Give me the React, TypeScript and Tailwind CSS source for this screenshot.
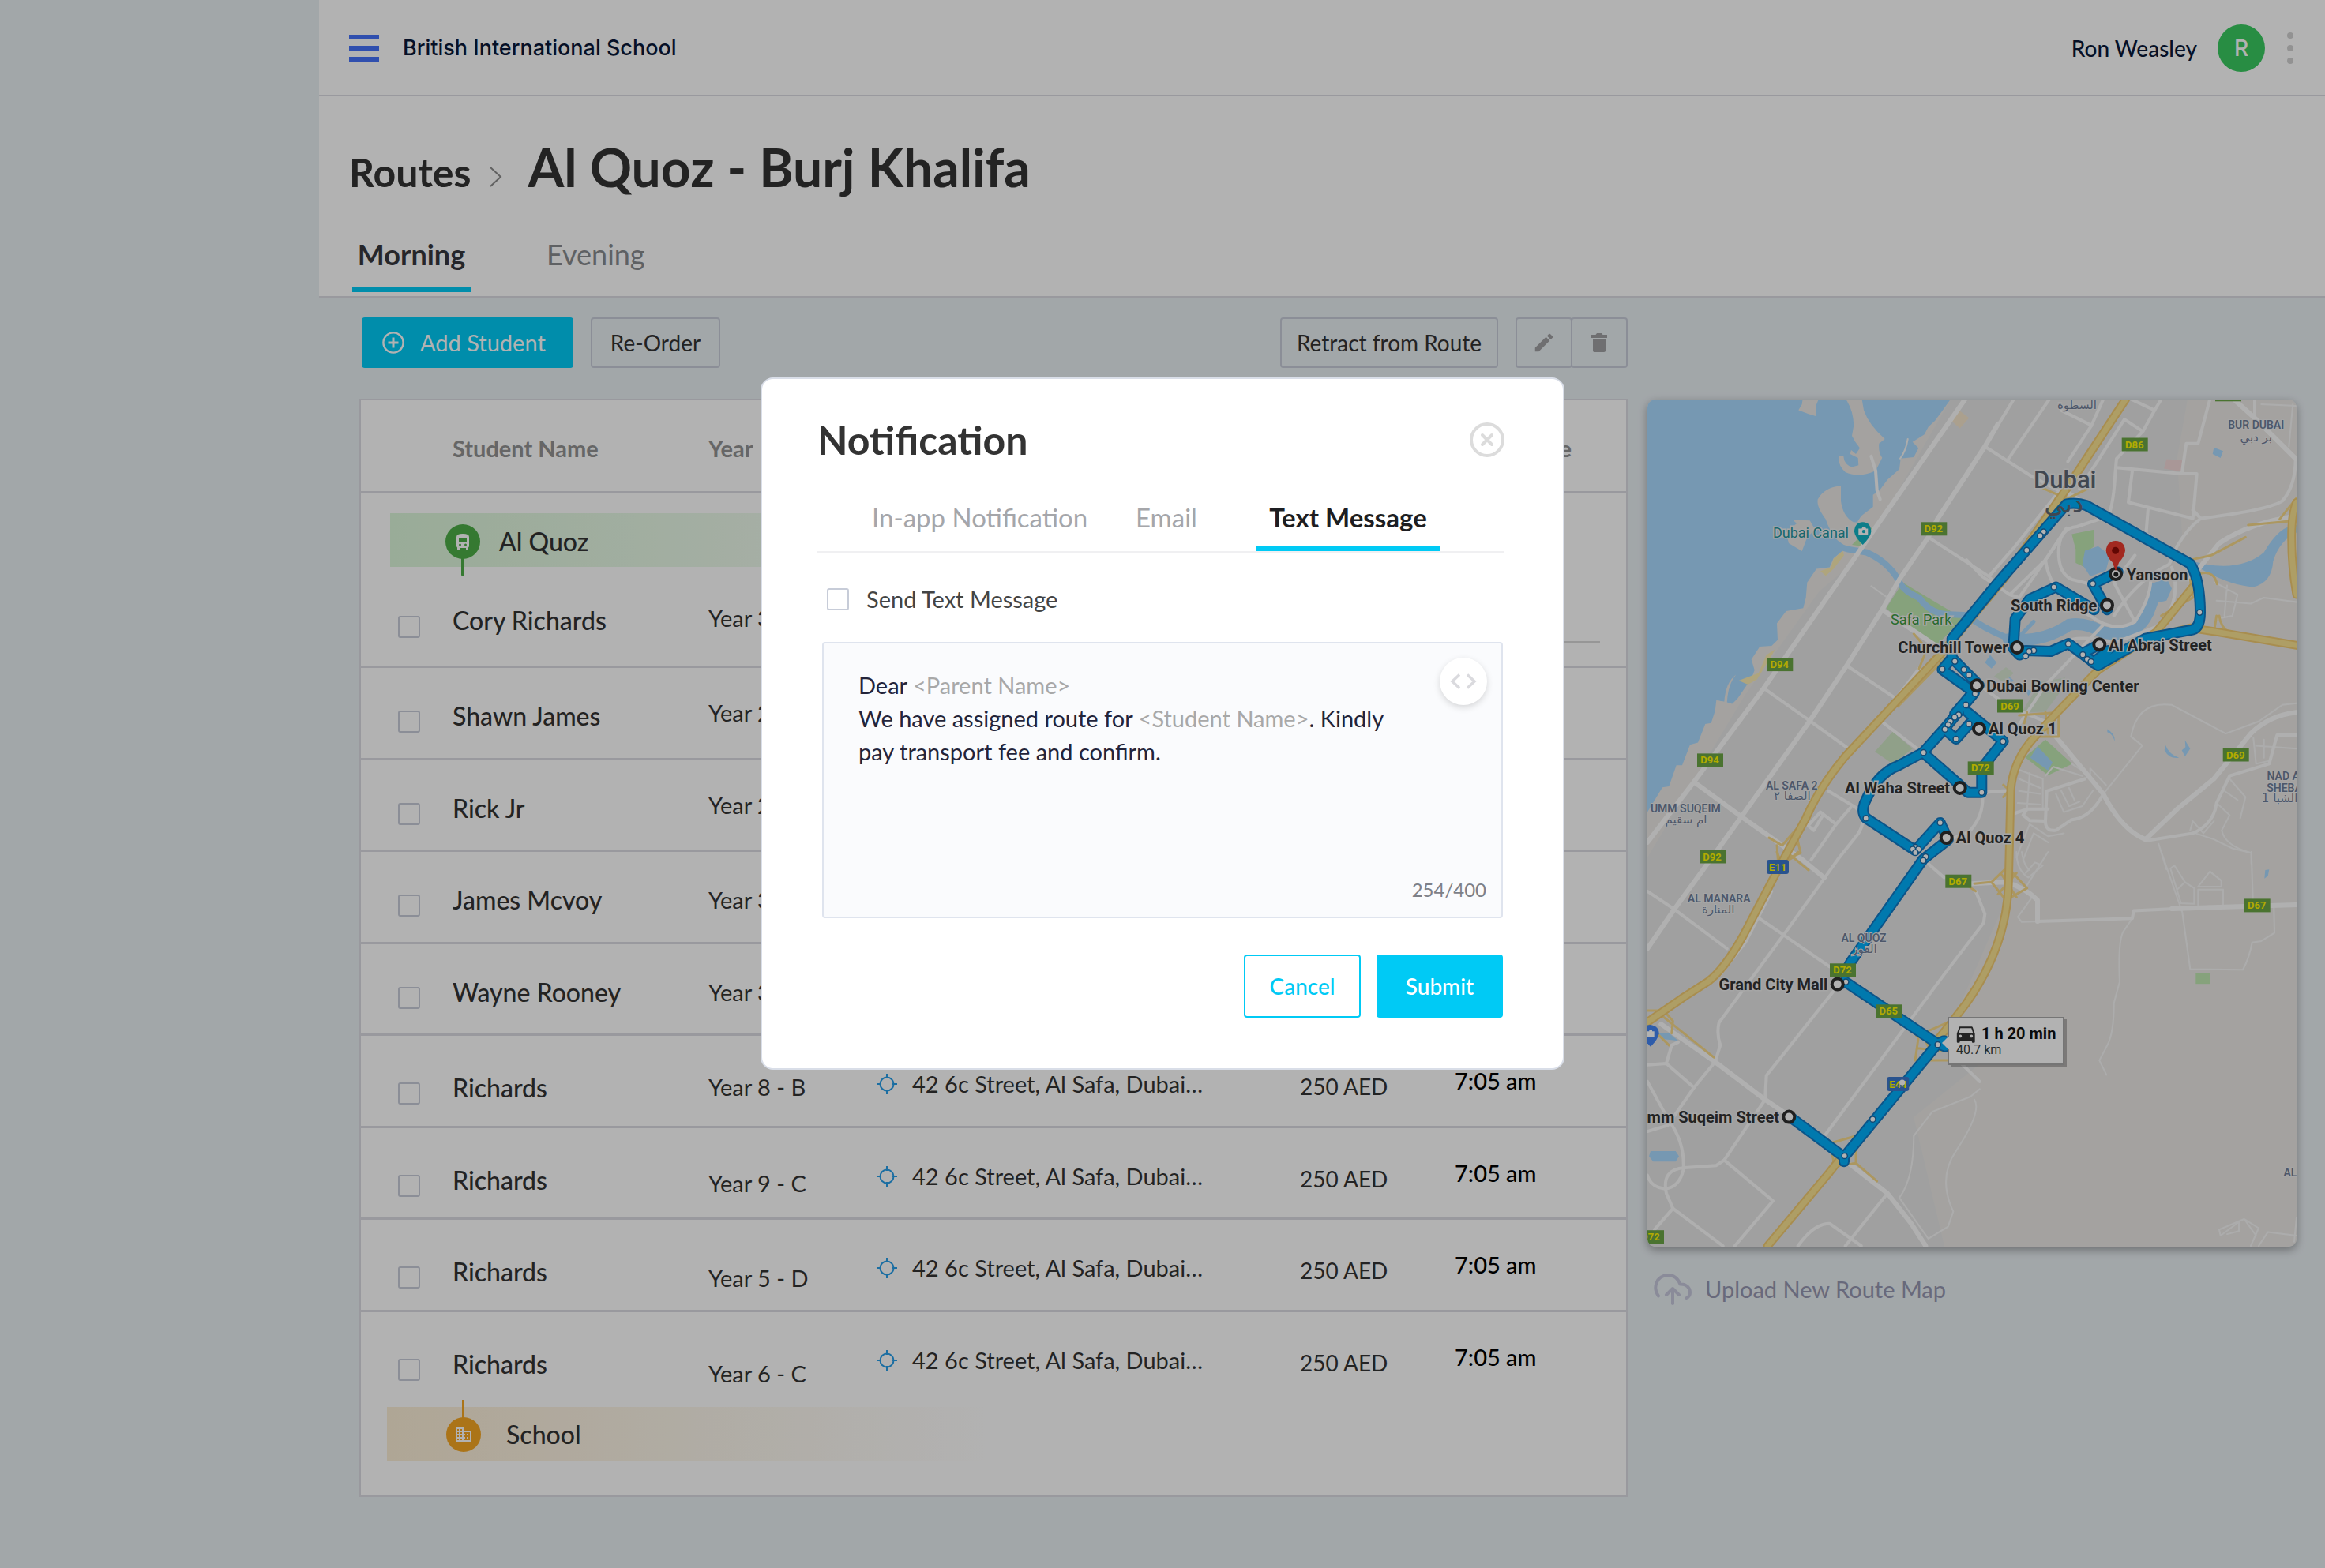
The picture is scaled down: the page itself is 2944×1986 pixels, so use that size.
import React from "react";

type Tile = "nw" | "ne" | "sw" | "se";

/* The map is surveyed in four sheets; each has its own origin inside the map. */
const ORIGIN: Record<Tile, [number, number]> = {
  nw: [-16, -17],
  ne: [404, -17],
  sw: [-16, 573],
  se: [404, 573],
};

const px = (t: Tile, x: number) => Math.round((ORIGIN[t][0] + x / 3) * 10) / 10;
const py = (t: Tile, y: number) => Math.round((ORIGIN[t][1] + y / 2.613) * 10) / 10;
const path = (t: Tile, d: string) =>
  d.replace(/(-?\d+),(-?\d+)/g, (_, x, y) => `${px(t, +x)},${py(t, +y)}`);

type Shape = [Tile, string];

const WIDE_ROADS: Shape[] = [
  ["nw", "M1255,43 L905,480 L830,575 L490,1000 L225,1310 L48,1510"],
  ["nw", "M1380,125 L1330,200 L1150,440 L1115,500 L1005,640 L940,740 L805,925 L665,1108 L405,1425 L310,1540 L150,1732 L48,1862"],
  ["nw", "M940,740 L1180,880"],
  ["nw", "M225,1310 L405,1425 L560,1520 L640,1570 L720,1627"],
  ["sw", "M100,570 L305,695 L495,820 L580,870"],
  ["sw", "M820,1035 L960,1130 L1050,1230 L1105,1304"],
  ["ne", "M330,1150 L520,1350 Q590,1470 680,1500"],
  ["ne", "M1254,1080 Q1150,1090 1080,1150 L940,1300 L800,1400 L680,1500"],
  ["ne", "M1015,43 L1100,110 L1250,240"],
  ["se", "M20,105 L140,100 Q210,110 270,160 L270,230"],
  ["se", "M780,188 L1254,175"],
  ["ne", "M380,350 L440,385 L700,500"],
  ["ne", "M850,640 L960,520 Q1080,450 1254,430"],
];

const ROADS: Shape[] = [
  ["nw", "M1115,500 L1345,630 L1380,660"],
  ["nw", "M1330,200 L1510,300 L1620,350"],
  ["nw", "M1345,630 L1440,535 L1620,340"],
  ["nw", "M805,925 L985,1030"],
  ["nw", "M1080,935 L960,1070 L800,1220"],
  ["nw", "M490,1000 L665,1108 L820,1205"],
  ["nw", "M945,1115 L1080,1205"],
  ["nw", "M735,1340 L840,1395 Q885,1430 850,1480 L770,1568 L565,1817"],
  ["nw", "M820,1395 L765,1450 L670,1568"],
  ["nw", "M765,1450 L705,1410 L658,1455 L680,1470 L715,1420"],
  ["nw", "M1400,1340 L1320,1345 Q1330,1420 1270,1475 L1200,1500"],
  ["nw", "M898,232 L915,280 L920,345 L932,375"],
  ["sw", "M48,130 L150,190 L350,320"],
  ["sw", "M565,275 L320,565 Q310,600 325,640 L305,695"],
  ["sw", "M520,130 L420,300 L325,405"],
  ["sw", "M465,215 L565,275 L740,380"],
  ["sw", "M765,450 L500,740 L495,820 L340,1020"],
  ["sw", "M305,695 L225,780 L125,905 L48,925"],
  ["sw", "M48,705 L120,700 L225,780"],
  ["sw", "M165,630 L140,640 L120,700"],
  ["sw", "M48,760 L130,890 Q190,960 185,1050 Q170,1110 115,1115 Q60,1110 48,1070"],
  ["sw", "M75,1250 L145,1180 L120,1130 Q100,1050 190,1045 L310,1038 L340,1020 L525,1155 L380,1304"],
  ["sw", "M145,1180 L335,1304"],
  ["sw", "M960,1130 L800,1304"],
  ["sw", "M620,1304 Q680,1230 740,1230 L860,1304"],
  ["sw", "M725,935 L1180,400 L1325,235 L1330,205 L1295,130"],
  ["sw", "M1110,35 L1175,85"],
  ["sw", "M1240,700 L1310,760"],
  ["ne", "M180,43 L0,300"],
  ["ne", "M315,43 L160,240"],
  ["ne", "M360,80 L475,130 L520,43"],
  ["ne", "M475,130 L385,250"],
  ["ne", "M625,43 L715,80 L740,43"],
  ["ne", "M715,80 L670,150 L600,110 L430,340"],
  ["ne", "M670,150 L570,240 L565,290 Q560,380 540,430 L420,465 Q350,470 350,550 Q350,620 400,640 L470,655"],
  ["ne", "M925,43 L880,190 L835,190 L818,290 L570,270"],
  ["ne", "M630,280 L615,385 L860,438 L875,290 L818,290"],
  ["ne", "M690,405 L680,510"],
  ["ne", "M1250,240 Q1250,330 1200,380 Q1150,410 890,438 L860,410"],
  ["ne", "M890,438 Q840,470 800,530 L770,590 Q650,640 560,760"],
  ["ne", "M1095,43 L1095,110"],
  ["ne", "M0,575 L60,630 L165,690 L300,575 L380,470"],
  ["ne", "M165,690 L200,700 L360,500"],
  ["ne", "M300,575 Q320,700 470,760 Q560,820 640,780 Q700,700 700,640"],
  ["ne", "M640,560 L560,650 L640,780"],
  ["ne", "M780,600 Q820,700 740,790 L560,850 Q430,820 360,850"],
  ["ne", "M200,1120 L300,990 L520,790"],
  ["ne", "M50,990 L160,1060 L300,1110"],
  ["ne", "M180,1415 L230,1400 L310,1400 M230,1400 L215,1420 L240,1438 L300,1440"],
  ["ne", "M450,1300 L305,1340 L300,1440 Q300,1475 340,1470 L400,1435 Q470,1430 520,1350"],
  ["ne", "M60,1345 L150,1340"],
  ["ne", "M680,1505 L860,1480 Q940,1450 950,1380 L1000,1290 L1150,1250 L1180,1155 L1254,1155"],
  ["se", "M270,230 L630,220 L635,195 L790,188"],
];

const LANES: Shape[] = [
  ["nw", "M898,662 L960,700"],
  ["nw", "M1037,175 Q1030,215 1008,240"],
  ["sw", "M1310,785 L1275,810 L1130,860 L1060,940 Q1060,1080 1005,1145 L1115,1280 L1190,1240 L1210,1190 Q1150,1080 1220,990 Q1320,860 1290,820"],
  ["ne", "M1254,1050 L1200,1055 L1110,1110 L985,1150 L780,1055 Q650,1040 625,1160 L668,1190 L520,1350"],
  ["ne", "M1120,60 L1254,65 M1240,60 L1225,200"],
  ["ne", "M1090,1165 L1100,1250 L1150,1240 M1100,1190 L1254,1200 M1130,1170 L1130,1230"],
  ["ne", "M950,1380 L1000,1420 L970,1470 Q980,1520 1080,1545 M1000,1300 L1060,1360 L1040,1430 M980,1340 L1030,1370"],
  ["ne", "M860,1440 L900,1480 L940,1440 M860,1440 L850,1470"],
  ["ne", "M945,650 L1030,690 L1010,760 L950,770 M990,660 L980,760 M950,710 L1080,720 L1130,700 L1254,715"],
  ["ne", "M200,1270 L290,1300 L290,1400 M200,1300 L280,1330 M200,1340 L280,1350 M195,1380 L280,1385 M240,1280 L230,1400"],
  ["ne", "M340,1350 L370,1410 L440,1390 L480,1340 M360,1340 L390,1390 L430,1375 M390,1330 L410,1370"],
  ["ne", "M300,1290 L330,1260 L440,1290 M400,1250 L470,1290 L470,1265 L530,1320"],
  ["ne", "M190,1560 L240,1450 L310,1490 L370,1480 M215,1568 L255,1480 L310,1510"],
  ["ne", "M730,1515 L760,1600"],
  ["ne", "M870,1480 L940,1500 L1010,1530 L1082,1545 L1082,1580"],
  ["se", "M190,0 Q190,60 235,85 L290,45 L260,35 L225,70 M210,0 Q220,50 240,60 M230,110 L310,0"],
  ["se", "M245,155 L195,215 L210,232 L270,230"],
  ["se", "M740,0 L820,200 L850,388 L1050,390 Q1075,350 1085,300 L1120,295 L1170,268 L1168,185"],
  ["se", "M1082,0 L1088,160"],
  ["se", "M630,220 L595,265 Q575,300 582,430 L560,500 Q560,600 535,640 L505,690 L532,738"],
  ["se", "M775,55 L815,170 L865,172 L865,120 L830,100 L790,45 L775,55 M830,100 L800,125"],
  ["se", "M880,180 L880,125 L975,125 L975,180 M880,115 L925,65 L968,95 L968,115 L880,115"],
  ["se", "M960,1250 L1055,1215 L1110,1245 L1080,1304 M960,1250 L965,1270 L1035,1225 L1035,1255 L990,1265 M1055,1215 L1100,1270"],
  ["se", "M1110,1304 L1145,1258 L1254,1270 M1254,1210 L1245,1290"],
];

const HIGHWAYS: Shape[] = [
  ["nw", "M1865,43 L1640,340 L1400,640 L1170,880 L1100,945 L800,1225 Q700,1330 650,1430 L580,1542 L520,1640 L410,1822 Q340,1930 280,1970 L190,2020 L48,2105"],
  ["ne", "M1254,385 Q1235,420 1235,500 Q1235,600 1254,690"],
  ["ne", "M860,665 L720,815 L500,940 L345,1080 L260,1160 Q175,1240 168,1340 L160,1642 Q155,1850 0,2042 L-60,2110 L-120,2175"],
  ["sw", "M795,1000 L740,1060 L505,1304"],
  ["ne", "M720,830 L850,800 L960,815 L1254,858"],
];

const RAMPS: Shape[] = [
  ["nw", "M510,1495 L560,1520 L610,1470 L630,1545 L590,1560 M540,1520 L545,1580 L600,1560 M1060,820 L1110,870 L1080,935 M1180,900 L1000,1060"],
  ["sw", "M540,0 Q560,60 620,0 M590,10 L660,60 M48,525 L110,525 L145,560 L140,600 M100,540 L300,680 M60,580 L130,640"],
  ["sw", "M1070,610 L1200,560 M1080,600 L1065,690 L1190,690 M1075,650 L1190,660 M1090,590 L1130,680"],
  ["sw", "M740,965 L840,940 L840,1030 L760,1040 Z M840,1030 L920,1090"],
  ["ne", "M270,330 L400,380 M320,400 L460,340 M300,440 L340,370"],
  ["ne", "M850,575 L930,560 L1060,500 M890,620 Q940,610 952,655 M950,760 L940,815 M960,760 Q965,800 1000,815 M850,640 L860,700 L740,760"],
  ["ne", "M1190,440 L1254,370 M1070,460 L1254,445"],
  ["ne", "M200,1090 L350,1080 L350,1160 L270,1160 M215,1130 L230,1080 M300,1080 L310,1150"],
  ["se", "M155,50 L95,100 L150,160 L230,120 Z M130,70 L190,150 M190,70 L120,140 M30,105 L90,100 M0,110 L35,130"],
  ["ne", "M140,1320 L180,1350 M140,1360 L180,1320"],
];

const ROUTE: Shape[] = [
  ["sw", "M590,877 L795,1010 L1150,635 L800,430 L775,440 L820,365 L1095,25 L1190,-40 L1160,-97 L1065,-5 L878,-112 Q860,-130 872,-160 Q920,-260 1000,-285 L1095,-329"],
  ["nw", "M1095,1213 L1235,1320 L1265,1345 L1318,1345 L1318,1265 L1400,1175 L1265,1080"],
  ["nw", "M1095,1213 L1180,1130 L1290,1015 L1168,938 L1205,900 L1308,990 L1215,1085"],
  ["nw", "M1178,1136 L1220,1168 L1290,1100"],
  ["nw", "M1205,905 L1205,835 L1380,650 L1640,390 Q1680,385 1715,395 L2110,588 Q2148,640 2148,750 Q2148,805 2110,808 L1940,835 L1760,925 L1647,852 L1580,878 L1485,875 L1462,890 L1438,868 L1445,770 L1500,705 L1600,665 L1745,740"],
  ["ne", "M535,740 L480,655 L575,615"],
  ["ne", "M440,885 L505,855 M480,915 L540,875"],
  ["sw", "M795,1010 L795,1025"],
  ["sw", "M1150,635 L1175,625 M1150,635 L1180,645"],
];

const DOTS: [Tile, number, number][] = [
  ["nw", 1216, 911], ["nw", 1168, 937], ["nw", 1250, 938], ["nw", 1270, 956], ["nw", 1293, 1018],
  ["nw", 1258, 1055], ["nw", 1230, 1088], ["nw", 1215, 1096], ["nw", 1199, 1110], ["nw", 1190, 1121],
  ["nw", 1178, 1136], ["nw", 1220, 1168], ["nw", 1270, 1118], ["nw", 1097, 1213], ["nw", 878, 1430],
  ["nw", 1318, 1345], ["nw", 1160, 1445], ["nw", 1066, 1526], ["nw", 1056, 1533], ["nw", 1078, 1533],
  ["nw", 1066, 1544], ["nw", 1105, 1558], ["nw", 1096, 1570],
  ["ne", 139, 1176], ["ne", 293, 482], ["ne", 280, 495], ["ne", 229, 543], ["ne", 332, 665],
  ["ne", 480, 654], ["ne", 886, 749], ["ne", 387, 853], ["ne", 255, 875], ["ne", 238, 878],
  ["ne", 225, 893], ["ne", 442, 889], ["ne", 459, 904], ["ne", 473, 912],
  ["sw", 777, 410], ["sw", 802, 430], ["sw", 1151, 638], ["sw", 1016, 763], ["sw", 904, 885], ["sw", 797, 1006],
];

type Stop = { t: Tile; x: number; y: number; label: string; lx: number; ly: number; end?: boolean };
const STOPS: Stop[] = [
  { t: "ne", x: 567, y: 622, label: "Yansoon", lx: 608, ly: 642 },
  { t: "ne", x: 534, y: 725, label: "South Ridge", lx: 496, ly: 745, end: true },
  { t: "ne", x: 192, y: 865, label: "Churchill Tower", lx: 158, ly: 884, end: true },
  { t: "ne", x: 505, y: 855, label: "Al Abraj Street", lx: 540, ly: 875 },
  { t: "ne", x: 39, y: 991, label: "Dubai Bowling Center", lx: 76, ly: 1010 },
  { t: "ne", x: 48, y: 1134, label: "Al Quoz 1", lx: 84, ly: 1153 },
  { t: "nw", x: 1235, y: 1330, label: "Al Waha Street", lx: 1197, ly: 1348, end: true },
  { t: "nw", x: 1184, y: 1495, label: "Al Quoz 4", lx: 1220, ly: 1513 },
  { t: "sw", x: 770, y: 438, label: "Grand City Mall", lx: 733, ly: 458, end: true },
  { t: "sw", x: 586, y: 877, label: "Umm Suqeim Street", lx: 549, ly: 895, end: true },
];

const BADGES: [Tile, number, number, string][] = [
  ["nw", 1135, 471, "D92"], ["nw", 550, 920, "D94"], ["nw", 285, 1237, "D94"], ["nw", 1313, 1263, "D72"],
  ["nw", 294, 1556, "D92"], ["ne", 638, 192, "D86"], ["ne", 165, 1057, "D69"], ["ne", 1022, 1219, "D69"],
  ["ne", 993, 27, ""], ["sw", 789, 390, "D72"], ["sw", 964, 526, "D65"], ["sw", 1228, 96, "D67"],
  ["sw", 60, 1273, "D72"], ["se", 1103, 176, "D67"],
];

const DISTRICTS: [Tile, number, number, string][] = [
  ["ne", 1100, 142, "BUR DUBAI"], ["nw", 596, 1334, "AL SAFA 2"], ["nw", 193, 1410, "UMM SUQEIM"],
  ["sw", 320, 167, "AL MANARA"], ["sw", 870, 299, "AL QUOZ"], ["ne", 1215, 1305, "NAD AL"],
  ["ne", 1225, 1342, "SHEBA 1"], ["se", 1262, 1073, "AL BA"],
];

const ARABIC: [Tile, number, number, string][] = [
  ["ne", 420, 75, "السطوة"], ["ne", 1100, 182, "بر دبي"], ["nw", 598, 1370, "الصفا ٢"], ["nw", 195, 1447, "ام سقيم"],
  ["sw", 317, 204, "المنارة"], ["sw", 873, 335, "القوز"], ["ne", 1215, 1378, "ند الشبا 1"],
];

function Strokes({ items, color, width }: { items: Shape[]; color: string; width: number }) {
  return (
    <g fill="none" stroke={color} strokeWidth={width} strokeLinecap="round" strokeLinejoin="round">
      {items.map(([t, d], i) => (
        <path key={i} d={path(t, d)} />
      ))}
    </g>
  );
}

function RouteMap() {
  return (
    <svg viewBox="0 0 822 1073" role="img" aria-label="Route map of Dubai" className="block h-auto w-full rounded-[10px] shadow-[0_4px_12px_rgba(0,0,0,0.35)]" fontFamily="Roboto, sans-serif">
      <rect width="822" height="1073" fill="#ebe9e6" />
      <path fill="#e6e6e6" d={path("nw", "M1200,43 L2100,43 L2060,240 L2080,500 L1900,840 L1500,1140 L1420,1340 L1410,1700 L1200,2120 L1330,2230 L1060,2420 L1180,2860 L48,2860 L48,1560 L420,1020 L700,680 L860,560 Z")} />
      <path fill="#aadaff" d={path("nw", "M0,0 L1240,0 L1200,43 L1170,80 L1140,115 L1115,135 L1100,160 L1055,185 L1078,205 L1060,235 L1010,240 L1005,275 L960,310 L930,345 L905,360 L905,400 L860,430 L845,450 L880,470 L840,500 L800,520 L790,545 L755,570 L740,600 L690,605 L655,650 L650,700 L640,735 L575,745 L540,785 L543,840 L520,860 L475,862 L443,905 L455,940 L440,975 L425,990 L390,1035 L370,1052 L345,1045 L310,1040 L305,1075 L290,1115 L268,1118 L240,1180 L210,1187 L180,1255 L158,1255 L130,1325 L105,1328 L48,1410 L0,1480 Z")} />
      <g fill="#ebe9e6">
        <path d={path("nw", "M790,30 L860,30 L870,80 Q890,130 950,175 L928,190 Q925,220 940,237 L915,280 Q850,305 800,285 Q770,260 775,232 L793,232 Q795,260 825,268 L850,262 L848,238 L818,225 L822,212 L840,225 L855,205 L838,185 L825,165 L832,130 Q830,70 790,30 Z")} />
        <path d={path("nw", "M640,30 L705,30 L688,65 L690,100 L660,92 L622,80 L635,60 Z")} />
        <path d={path("nw", "M783,330 L783,380 Q790,430 830,450 L890,455 L880,500 L800,530 L770,510 Q740,480 725,440 Q690,400 695,375 Q720,335 783,330 Z")} />
        <path d={path("nw", "M600,442 L665,445 L685,475 L655,500 L635,546 L585,520 L575,485 L615,455 Z")} />
        <path d={path("nw", "M385,955 Q345,980 340,1045 L310,1040 L350,1060 Q350,990 385,955 Z")} />
      </g>
      <g fill="#fbedb4">
        <path d={path("nw", "M790,545 L755,572 L745,600 L705,612 L725,628 L755,605 L795,560 Z")} />
        <path d={path("nw", "M535,870 L500,890 L470,950 L395,975 L430,988 L465,970 L500,920 Z")} />
        <path fill="#f5e6cc" d={path("nw", "M1235,82 L1270,105 L1235,140 L1203,115 Z")} />
      </g>
      <g fill="#c0e8b2">
        <path d={path("nw", "M1018,650 L1200,745 L1245,770 L1150,855 L1060,815 L955,735 Z")} />
        <path fill="#cfe6c5" d={path("nw", "M980,1143 L1055,1200 L980,1250 L912,1210 Z")} />
        <path d={path("nw", "M825,525 L865,490 L905,465 L860,530 Z")} />
        <path d={path("ne", "M400,490 L485,475 L485,530 L450,555 L450,600 L415,585 L415,540 Z")} />
        <path d={path("ne", "M300,1170 L402,1250 L310,1288 L222,1228 Z")} />
        <path fill="#d7e6d2" d={path("ne", "M375,965 L375,990 L300,1078 L210,1080 L280,980 Z M105,960 L150,930 L180,950 L140,980 Z")} />
        <path d={path("se", "M871,402 L925,402 L925,437 L871,437 Z")} />
      </g>
      <path fill="#f3d9d9" d={path("ne", "M760,242 L820,245 L815,283 L750,273 Z")} />
      <g fill="#aadaff">
        <path d={path("ne", "M1254,460 Q1190,460 1130,550 Q1050,610 910,590 L860,580 L890,605 Q1000,660 1090,665 Q1160,650 1165,580 Q1190,510 1254,485 Z")} />
        <path d={path("ne", "M450,545 L500,530 L545,560 L530,610 L470,630 L440,590 Z")} />
        <path d={path("ne", "M700,655 L760,635 L780,670 L760,710 L720,718 L690,690 Z")} />
        <path d={path("ne", "M270,1192 L327,1245 L310,1272 L242,1230 Z")} />
        <path d={path("ne", "M90,890 L115,915 L95,935 L70,915 Z M160,960 L180,975 L165,985 Z M220,1000 L250,1010 L235,1025 Z")} />
        <path d={path("ne", "M755,1187 Q770,1220 808,1230 Q770,1235 752,1205 Z M830,1172 L850,1200 L830,1226 L818,1205 L832,1195 Z M535,1135 Q565,1150 563,1175 Q555,1150 535,1145 Z M940,203 L975,215 L965,238 L935,225 Z")} />
        <path d={path("sw", "M60,990 L155,990 L168,1007 L155,1025 L70,1025 L54,1007 Z M90,600 L130,600 L165,625 L110,620 Z")} />
        <path d={path("se", "M1135,60 L1150,58 L1145,80 L1132,88 Z")} />
      </g>
      <g fill="none" stroke="#aadaff" strokeLinecap="round">
        <path strokeWidth="8" d={path("nw", "M735,520 L810,540 L880,550 Q960,580 1000,640 Q1020,680 1080,700 Q1120,750 1180,755 L1260,758 Q1320,800 1420,835")} />
        <path strokeWidth="15" d={path("ne", "M160,838 Q290,850 390,790 Q450,780 520,815 Q640,840 690,750 L720,680")} />
        <path strokeWidth="5" d={path("ne", "M200,830 L255,780")} />
      </g>
      <Strokes items={LANES} color="#f7f7f7" width={2} />
      <Strokes items={ROADS} color="#fbfbfb" width={4} />
      <Strokes items={WIDE_ROADS} color="#fdfdfd" width={6} />
      <Strokes items={RAMPS} color="#f6d98a" width={3} />
      <Strokes items={HIGHWAYS} color="#f1cb72" width={11} />
      <Strokes items={HIGHWAYS} color="#fae291" width={7} />
      <Strokes items={ROUTE} color="#1179c4" width={14} />
      <Strokes items={ROUTE} color="#00aefa" width={10} />
      <g fill="#fff" stroke="#1a6ba8" strokeWidth="1.5">
        {DOTS.map(([t, x, y], i) => (
          <circle key={i} cx={px(t, x)} cy={py(t, y)} r="3.6" />
        ))}
      </g>
      <g textAnchor="middle" fontWeight="700" fontSize="13">
        {BADGES.map(([t, x, y, s], i) => (
          <g key={i}>
            <rect x={px(t, x) - 16} y={py(t, y) - 8} width="33" height="17" fill="#6ba545" />
            <text x={px(t, x)} y={py(t, y) + 5} fill="#fff500">{s}</text>
          </g>
        ))}
        {([["sw", 543, 50, "E11"], ["sw", 1000, 768, "E44"]] as [Tile, number, number, string][]).map(([t, x, y, s]) => (
          <g key={s}>
            <rect x={px(t, x) - 14} y={py(t, y) - 9} width="28" height="18" rx="3" fill="#3c77cc" />
            <text x={px(t, x)} y={py(t, y) + 5} fill="#fff500">{s}</text>
          </g>
        ))}
        <g fill="#6f7d98" stroke="#eee" strokeWidth="2" paintOrder="stroke" fontSize="14">
          {DISTRICTS.map(([t, x, y, s], i) => (
            <text key={i} x={px(t, x)} y={py(t, y)} fontWeight="600">{s}</text>
          ))}
          {ARABIC.map(([t, x, y, s], i) => (
            <text key={i} x={px(t, x)} y={py(t, y)} fontFamily="DejaVu Sans, sans-serif" fontWeight="400" fontSize="15">{s}</text>
          ))}
        </g>
      </g>
      <circle cx={px("sw", 1016)} cy={py("sw", 763)} r="3.6" fill="#fff" />
      <g stroke="#eee" strokeWidth="3" paintOrder="stroke">
        <text x={px("nw", 813)} y={py("nw", 502)} textAnchor="end" fontSize="18" fill="#23949f">Dubai Canal</text>
        <text x={px("nw", 972)} y={py("nw", 790)} fontSize="18" fill="#3a9a41">Safa Park</text>
        <text x={px("ne", 255)} y={py("ne", 337)} fontSize="31" fontWeight="500" fill="#5e6673">Dubai</text>
        <text x={px("ne", 370)} y={py("ne", 418)} textAnchor="middle" fontSize="32" fontFamily="DejaVu Sans, sans-serif" fill="#5e6673" strokeWidth="0">دبي</text>
      </g>
      <g>
        <path fill="#12b3c4" d={path("nw", "M866,450 Q898,452 898,482 Q896,500 866,525 Q836,500 834,482 Q834,452 866,450 Z")} />
        <path fill="#fff" d={path("nw", "M850,472 L862,472 L865,467 L876,467 L879,472 L886,472 L886,491 L850,491 Z")} />
        <circle cx={px("nw", 870)} cy={py("nw", 481)} r="2.2" fill="#12b3c4" />
      </g>
      <g>
        <path fill="#4285f4" d={path("sw", "M58,572 Q92,575 92,602 Q88,620 60,645 Q34,620 28,602 Q28,575 58,572 Z")} />
        <path fill="#fff" d={path("sw", "M48,594 L55,594 L55,588 L66,588 L66,594 L74,594 L74,612 L48,612 Z")} />
      </g>
      <g fill="#fff" stroke="#2f2f2f" strokeWidth="4">
        {STOPS.map((s) => (
          <circle key={s.label} cx={px(s.t, s.x)} cy={py(s.t, s.y)} r="7" />
        ))}
      </g>
      <circle cx={px("ne", 568)} cy={py("ne", 623)} r="3" fill="#222" />
      <path fill="#e93b2e" d={path("ne", "M566,512 Q602,514 603,545 Q600,565 580,583 L567,612 L554,583 Q532,565 530,545 Q532,514 566,512 Z")} />
      <circle cx={px("ne", 566)} cy={py("ne", 544)} r="4.5" fill="#8c0b05" />
      <g fontSize="20" fontWeight="700" fill="#333" stroke="#eee" strokeWidth="3" paintOrder="stroke">
        {STOPS.map((s) => (
          <text key={s.label} x={px(s.t, s.lx)} y={py(s.t, s.ly)} textAnchor={s.end ? "end" : "start"}>{s.label}</text>
        ))}
      </g>
      <g>
        <rect x="384" y="785" width="147" height="60" fill="#00000040" />
        <path d="M381 783h146v59h-146v-19l-8-8 8-8z" fill="#fff" />
        <path d="M381 807v-24h146v59h-146v-19" fill="none" stroke="#a8a8a8" strokeWidth="2" />
        <path transform="translate(388 788) scale(1.27)" fill="#333" d="M18.92 6.01C18.72 5.42 18.16 5 17.5 5h-11c-.66 0-1.21.42-1.42 1.01L3 12v8c0 .55.45 1 1 1h1c.55 0 1-.45 1-1v-1h12v1c0 .55.45 1 1 1h1c.55 0 1-.45 1-1v-8l-2.08-5.99zM6.5 16c-.83 0-1.5-.67-1.5-1.5S5.67 13 6.5 13s1.5.67 1.5 1.5S7.33 16 6.5 16zm11 0c-.83 0-1.5-.67-1.5-1.5s.67-1.5 1.5-1.5 1.5.67 1.5 1.5-.67 1.5-1.5 1.5zM5 11l1.5-4.5h11L19 11H5z" />
        <text x="423" y="810" fontSize="20" fontWeight="700" fill="#111">1 h 20 min</text>
        <text x="391" y="829" fontSize="16" fill="#34403f">40.7 km</text>
      </g>
    </svg>
  );
}

type Student = { name: string; year: string; yearPad: string; address?: string; fee?: string; time?: string };
const STOP_ADDRESS = "42 6c Street, Al Safa, Dubai…";
const STUDENTS: Student[] = [
  { name: "Shawn James", year: "Year 2", yearPad: "pt-[37px]" },
  { name: "Rick Jr", year: "Year 2", yearPad: "pt-[37px]" },
  { name: "James Mcvoy", year: "Year 3", yearPad: "pt-[41px]" },
  { name: "Wayne Rooney", year: "Year 3", yearPad: "pt-[41px]" },
  { name: "Richards", year: "Year 8 - B", yearPad: "pt-[45px]", address: STOP_ADDRESS, fee: "250 AED", time: "7:05 am" },
  { name: "Richards", year: "Year 9 - C", yearPad: "pt-[50px]", address: STOP_ADDRESS, fee: "250 AED", time: "7:05 am" },
  { name: "Richards", year: "Year 5 - D", yearPad: "pt-[54px]", address: STOP_ADDRESS, fee: "250 AED", time: "7:05 am" },
  { name: "Richards", year: "Year 6 - C", yearPad: "pt-[58px]", address: STOP_ADDRESS, fee: "250 AED", time: "7:05 am" },
];

function Tick({ label }: { label: string }) {
  return <input type="checkbox" aria-label={label} className="block size-7 appearance-none rounded-[3px] border-2 border-[#c7ccd8] checked:bg-[#00caf5]" />;
}

function Target() {
  return (
    <svg viewBox="0 0 26 26" className="size-[26px] shrink-0" fill="none" stroke="#279ee9" strokeWidth="2" aria-hidden="true">
      <circle cx="13" cy="13" r="8.5" />
      <path d="M13 0v6M13 20v6M0 13h6M20 13h6" />
    </svg>
  );
}

const outline = "h-16 rounded border-2 border-[#c7ccd8] text-[28px]";

export default function App() {
  return (
    <div className="flex min-h-screen bg-[#e9eff3] font-['Lato',sans-serif] text-[#333]">
      <aside className="w-[404px] shrink-0" />
      <div className="min-w-0 flex-1">
        <header className="bg-white">
          <div className="flex h-[122px] items-center border-b-2 border-[#dcdce3] pt-0.5 pr-10 pl-[38px]">
            <button aria-label="Menu" className="flex w-[38px] flex-col gap-2">
              <span className="h-1.5 bg-[#4571f9]" />
              <span className="h-1.5 bg-[#4571f9]" />
              <span className="h-1.5 bg-[#4571f9]" />
            </button>
            <span className="ml-[30px] font-['Inter',sans-serif] text-[27px] font-medium text-[#0a1838]">British International School</span>
            <span className="mr-[26px] ml-auto text-[28px] font-medium text-[#0a1838]">Ron Weasley</span>
            <span className="flex size-[60px] items-center justify-center rounded-full bg-[#3acb61] font-['Inter',sans-serif] text-[28px] font-medium text-white">R</span>
            <button aria-label="More" className="ml-7 flex flex-col gap-2">
              <span className="size-2 rounded-full bg-[#d2d2d2]" />
              <span className="size-2 rounded-full bg-[#d2d2d2]" />
              <span className="size-2 rounded-full bg-[#d2d2d2]" />
            </button>
          </div>
          <div className="flex items-baseline pt-[50px] pl-[38px] leading-20 font-bold">
            <a href="#routes" className="text-[50px]">Routes</a>
            <svg viewBox="0 0 16 26" className="mx-6 h-[26px] w-4" fill="none" stroke="#8c8c8c" strokeWidth="2" aria-hidden="true">
              <path d="M1 1l13 12L1 25" />
            </svg>
            <h1 className="ml-2 text-[66px]">Al Quoz - Burj Khalifa</h1>
          </div>
          <div role="tablist" className="flex gap-[96px] border-b-2 border-[#dcdce3] pt-[38px] pb-[5px] pl-[42px] text-[36px] leading-12">
            <button role="tab" aria-selected="true" className="h-[74px] w-[150px] border-b-[7px] border-[#00caf5] pb-[15px] font-bold text-[#37373d]">Morning</button>
            <button role="tab" aria-selected="false" className="h-[74px] pb-[22px] text-[#888b8f]">Evening</button>
          </div>
        </header>

        <main className="grid grid-cols-[1606fr_822fr] gap-x-[25px] pt-[25px] pr-9 pl-[51px]">
          <div className="flex items-center pl-[3px]">
            <button className="flex h-16 w-[268px] items-center gap-5 rounded bg-[#00caf5] pl-[26px] text-[29px] text-white">
              <svg viewBox="0 0 28 28" className="size-7" fill="none" stroke="currentColor" strokeWidth="2.4" aria-hidden="true">
                <circle cx="14" cy="14" r="12.6" />
                <path d="M14 7.500v13M7.500 14h13" strokeWidth="3" />
              </svg>
              Add Student
            </button>
            <button className={`${outline} ml-[22px] w-[164px]`}>Re-Order</button>
            <button className={`${outline} ml-auto w-[276px]`}>Retract from Route</button>
            <div className="ml-[22px] flex">
              <button aria-label="Edit" className={`${outline} flex w-[72px] items-center justify-center`}>
                <svg viewBox="0 0 24 24" className="size-[30px]" fill="#a0a0a2" aria-hidden="true">
                  <path d="M3 17.250V21h3.750L17.810 9.940l-3.750-3.750L3 17.250zM20.710 7.040a1 1 0 0 0 0-1.410l-2.340-2.340a1 1 0 0 0-1.410 0l-1.830 1.830 3.750 3.750 1.830-1.830z" />
                </svg>
              </button>
              <button aria-label="Delete" className={`${outline} -ml-0.5 flex w-[72px] items-center justify-center`}>
                <svg viewBox="0 0 20 24" className="h-6 w-5" fill="#a0a0a2" aria-hidden="true">
                  <path d="M2 8h16v14a2 2 0 0 1-2 2H4a2 2 0 0 1-2-2zM0 2h5.500L7 0h6l1.500 2H20v4H0z" />
                </svg>
              </button>
            </div>
          </div>
          <div />

          <section className="mt-[39px] border-2 border-[#dcdce3] bg-white pb-[43px]">
            <table className="w-full table-fixed border-collapse text-left [&_td]:p-0 [&_td]:align-top">
              <colgroup>
                <col className="w-[116px]" />
                <col className="w-[324px]" />
                <col className="w-[213px]" />
                <col />
                <col className="w-[196px]" />
                <col className="w-[217px]" />
              </colgroup>
              <thead>
                <tr className="h-[116px] border-b-3 border-[#dcdce3] text-[29px] text-[#939393] [&>th]:p-0 [&>th]:pt-1.5 [&>th]:font-bold">
                  <td />
                  <th scope="col">Student Name</th>
                  <th scope="col">Year</th>
                  <td />
                  <td />
                  <th scope="col" className="whitespace-nowrap"><span className="block w-[148px] text-right">Pick Time</span></th>
                </tr>
              </thead>
              <tbody>
                <tr>
                  <td colSpan={6}>
                    <div className="mt-[25px] ml-[37px] flex h-[68px] w-[1000px] items-center bg-linear-to-r from-[#dcf6da] to-white pt-1 pl-[70px] text-[32px] font-medium">
                      <span className="relative mr-6 flex size-11 items-center justify-center rounded-full bg-[#4dae47]">
                        <span className="absolute top-10 left-5 h-[26px] w-1 rounded-b bg-[#4dae47]" />
                        <svg viewBox="0 0 16 20" className="h-5 w-4" fill="#fff" aria-hidden="true">
                          <path fillRule="evenodd" d="M0 4q0-4 8-4t8 4v11q0 1.500-1 2.500V20h-3v-2H4v2H1v-2.500Q0 16.500 0 15zM3 5v5h10V5zM4.500 12.500a1.500 1.500 0 1 0 0 3 1.500 1.500 0 0 0 0-3zM11.500 12.500a1.500 1.500 0 1 0 0 3 1.500 1.500 0 0 0 0-3z" />
                        </svg>
                      </span>
                      Al Quoz
                    </div>
                  </td>
                </tr>
                <tr className="h-[127px] border-b-3 border-[#dcdce3]">
                  <td><div className="pt-[62px] pl-[47px]"><Tick label="Select Cory Richards" /></div></td>
                  <td><div className="pt-12 text-[32px] leading-10 font-medium">Cory Richards</div></td>
                  <td><div className="pt-[45px] text-[29px] leading-10">Year 3</div></td>
                  <td />
                  <td />
                  <td><input aria-label="Pick-up time of Cory Richards" className="h-24 w-[184px] border-b-2 border-[#d8d8d8] text-[29px]" /></td>
                </tr>
                {STUDENTS.map((s, i) => (
                  <tr key={i} className="border-b-3 border-[#dcdce3] last:border-b-0 odd:h-[117px] even:h-[116px]">
                    <td><div className={s.time ? "pt-[59px] pl-[47px]" : "pt-[54px] pl-[47px]"}><Tick label={`Select ${s.name}`} /></div></td>
                    <td><div className={s.time ? "pt-[46px] text-[32px] leading-10 font-medium" : "pt-[41px] text-[32px] leading-10 font-medium"}>{s.name}</div></td>
                    <td><div className={`${s.yearPad} text-[29px] leading-10`}>{s.year}</div></td>
                    <td>
                      {s.address && (
                        <div className="flex items-center gap-[19px] pt-[41px] text-[29px] leading-10">
                          <Target />
                          <span>{s.address}</span>
                        </div>
                      )}
                    </td>
                    <td>{s.fee && <div className="pt-[44px] text-[28px] leading-10">{s.fee}</div>}</td>
                    <td>{s.time && <div className="pt-[37px] text-[29px] leading-10 font-medium text-black">{s.time}</div>}</td>
                  </tr>
                ))}
              </tbody>
            </table>
            <div className="mt-[5px] ml-[33px] flex h-[69px] w-[760px] items-center bg-linear-to-r from-[#fbeed6] to-white pt-0.5 pl-[75px] text-[32px] font-medium">
              <span className="relative mr-8 flex size-11 items-center justify-center rounded-full bg-[#f5a623]">
                <span className="absolute bottom-10 left-5 h-[26px] w-[3px] bg-[#f5a623]" />
                <svg viewBox="0 0 20 18" className="h-[18px] w-5" fill="#fff" aria-hidden="true">
                  <path fillRule="evenodd" d="M10 4V0H0v18h20V4zM4 16H2v-2h2zm0-4H2v-2h2zm0-4H2V6h2zm0-4H2V2h2zm4 12H6v-2h2zm0-4H6v-2h2zm0-4H6V6h2zm0-4H6V2h2zm10 12h-8v-2h2v-2h-2v-2h2V8h-2V6h8zm-2-8h-2v2h2zm0 4h-2v2h2z" />
                </svg>
              </span>
              School
            </div>
          </section>

          <div className="mt-10">
            <RouteMap />
            <button className="mt-8 ml-2 flex items-center gap-[17px] text-[29px] text-[#9597b1]">
              <svg viewBox="0 0 48 42" className="h-[42px] w-12" fill="none" stroke="#c6c8dc" strokeWidth="4" strokeLinecap="round" strokeLinejoin="round" aria-hidden="true">
                <path d="M6 29.500C-1 20 2 4 18 3c8 0 13 5 15.500 11.500C41 14 46 19 46 25c0 3-2 6-4.500 7M24 39V21M16 28l8-8 8 8" />
              </svg>
              Upload New Route Map
            </button>
          </div>
        </main>
      </div>

      <div className="fixed inset-0 flex items-start justify-center bg-black/30 pt-[478px]">
        <div role="dialog" aria-modal="true" aria-labelledby="dialog-title" className="w-[1018px] rounded-2xl border-2 border-[#d9dee8] bg-white px-[70px] pb-16">
          <div className="flex items-center justify-between pt-[45px]">
            <h2 id="dialog-title" className="text-[50px] leading-16 font-bold">Notification</h2>
            <button aria-label="Close" className="mr-1">
              <svg viewBox="0 0 44 44" className="size-11" fill="none" stroke="#dcdcdc" strokeWidth="4" strokeLinecap="round" aria-hidden="true">
                <circle cx="22" cy="22" r="20" />
                <path d="M16 16l12 12M28 16L16 28" />
              </svg>
            </button>
          </div>
          <div role="tablist" className="mr-1 flex items-end border-b-2 border-[#f0f0f2] pt-[41px] pl-[69px] text-[33px] leading-10 text-[#a5a6aa]">
            <button role="tab" aria-selected="false" className="h-[68px] w-[270px] pb-[18px] text-left whitespace-nowrap">In-app Notification</button>
            <button role="tab" aria-selected="false" className="ml-[64px] h-[68px] pb-[18px]">Email</button>
            <button role="tab" aria-selected="true" className="mr-[82px] ml-auto h-[68px] w-[232px] border-b-6 border-[#00caf5] pb-3 font-bold text-[#1d1e22]">Text Message</button>
          </div>
          <label className="mt-[39px] ml-3 flex h-10 items-center gap-[22px] text-[29px] text-[#444]">
            <input type="checkbox" className="size-7 appearance-none rounded-[3px] border-2 border-[#c7ccd8] checked:bg-[#00caf5]" />
            Send Text Message
          </label>
          <div className="relative mx-1.5 mt-[34px] h-[350px] rounded border-2 border-[#dfe4ee] bg-[#fafbfd]">
            <div role="textbox" aria-multiline="true" aria-label="Message" contentEditable suppressContentEditableWarning className="h-full pt-8 pr-[130px] pl-11 text-[29px] leading-[42px] text-[#23243a] outline-none">
              <p>Dear <span className="text-[#a8a8a8]">&lt;Parent Name&gt;</span></p>
              <p>We have assigned route for <span className="text-[#a8a8a8]">&lt;Student Name&gt;</span>. Kindly pay transport fee and confirm.</p>
            </div>
            <button aria-label="Insert field" className="absolute top-[18px] right-[18px] flex size-[60px] items-center justify-center rounded-full bg-white shadow-[0_3px_8px_rgba(0,0,0,0.15)]">
              <svg viewBox="0 0 34 20" className="h-5 w-[34px]" fill="none" stroke="#dadade" strokeWidth="3.500" aria-hidden="true">
                <path d="M12 1.500L3 10l9 8.500M22 1.500L31 10l-9 8.500" />
              </svg>
            </button>
            <span className="absolute right-[19px] bottom-4 text-[24px] leading-9 text-[#7d8088]">254/400</span>
          </div>
          <div className="mt-[46px] mr-1.5 flex justify-end gap-5 text-[28px] font-medium">
            <button className="h-20 w-[148px] rounded border-2 border-[#00caf5] text-[#00caf5]">Cancel</button>
            <button className="h-20 w-40 rounded bg-[#00caf5] text-white">Submit</button>
          </div>
        </div>
      </div>
    </div>
  );
}
